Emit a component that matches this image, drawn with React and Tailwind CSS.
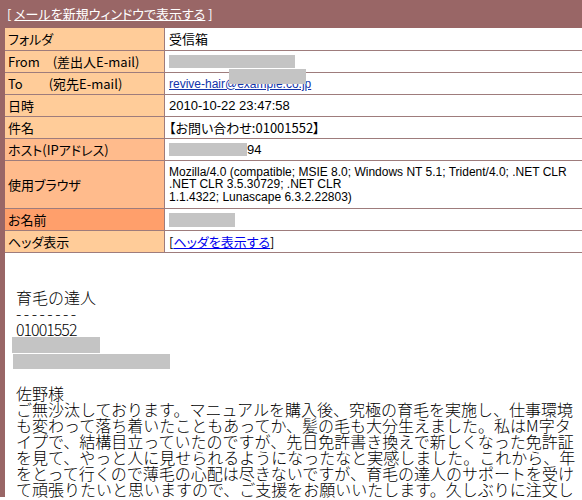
const JP = "font-['MS_PGothic','Noto_Sans_CJK_JP',sans-serif]";

const ROWS = [
  { label: "フォルダ", bg: "bg-[#ffcc99]", kind: "text", value: "受信箱" },
  { label: "From　(差出人E-mail)", bg: "bg-[#ffcc99]", kind: "from" },
  { label: "To　　(宛先E-mail)", bg: "bg-[#ffcc99]", kind: "to" },
  { label: "日時", bg: "bg-[#ffcc99]", kind: "date", value: "2010-10-22 23:47:58" },
  { label: "件名", bg: "bg-[#ffcc99]", kind: "text", value: "【お問い合わせ:01001552】" },
  { label: "ホスト(IPアドレス)", bg: "bg-[#ffbb8c]", kind: "host" },
  { label: "使用ブラウザ", bg: "bg-[#ffbb8c]", kind: "ua", tall: true },
  { label: "お名前", bg: "bg-[#ff9f6b]", kind: "name" },
  { label: "ヘッダ表示", bg: "bg-[#ffcc99]", kind: "header" },
];

const UA_LINES = [
  "Mozilla/4.0 (compatible; MSIE 8.0; Windows NT 5.1; Trident/4.0; .NET CLR",
  ".NET CLR 3.5.30729; .NET CLR",
  "1.1.4322; Lunascape 6.3.2.22803)",
];

const BODY = [
  "ご無沙汰しております。マニュアルを購入後、究極の育毛を実施し、仕事環境",
  "も変わって落ち着いたこともあってか、髪の毛も大分生えました。私はM字タ",
  "イプで、結構目立っていたのですが、先日免許書き換えで新しくなった免許証",
  "を見て、やっと人に見せられるようになったなと実感しました。これから、年",
  "をとって行くので薄毛の心配は尽きないですが、育毛の達人のサポートを受け",
  "て頑張りたいと思いますので、ご支援をお願いいたします。久しぶりに注文し",
];

function Redacted({ className = "" }) {
  return <span className={`inline-block bg-[#c4c4c4] ${className}`} />;
}

function Value({ row }) {
  switch (row.kind) {
    case "from":
      return <Redacted className="w-[126px] h-[13px]" />;
    case "to":
      return (
        <div className="relative flex items-center">
          <a className="text-[#1133aa] underline text-[12px] font-['Liberation_Sans',sans-serif]">revive-hair@example.co.jp</a>
          <Redacted className="absolute left-[60px] top-[-6px] w-[77px] h-[15px]" />
        </div>
      );
    case "date":
      return <span className="text-[13px] font-['Liberation_Sans',sans-serif]">{row.value}</span>;
    case "host":
      return (
        <div className="flex items-center">
          <Redacted className="w-[78px] h-[13px]" />
          <span className="text-[13px] font-['Liberation_Sans',sans-serif]">94</span>
        </div>
      );
    case "ua":
      return (
        <div className="text-[12px] leading-[12.5px] font-['Liberation_Sans',sans-serif] whitespace-nowrap">
          {UA_LINES.map((l) => (
            <div key={l}>{l}</div>
          ))}
        </div>
      );
    case "name":
      return <Redacted className="w-[66px] h-[14px]" />;
    case "header":
      return (
        <span className="text-[13px]">
          [<a className="text-[#0000ee] underline">ヘッダを表示する</a>]
        </span>
      );
    default:
      return <span className="text-[13px]">{row.value}</span>;
  }
}

export default function App() {
  return (
    <div className={`w-[582px] h-[500px] overflow-hidden bg-white text-black ${JP} [font-feature-settings:'palt']`}>
      <div className="h-[28px] bg-[#996666] text-white text-[13px] flex items-center pl-[7px] whitespace-pre">
        [ <a className="underline">メールを新規ウィンドウで表示する</a> ]
      </div>

      <div className="border-l-[5px] border-[#996666] w-[600px]">
        {ROWS.map((row, i) => (
          <div
            key={row.label}
            className={`flex border-b border-[#9e7c7c] ${row.tall ? "h-[48px]" : i === 0 ? "h-[23px]" : "h-[22px]"}`}
          >
            <div className={`w-[160px] shrink-0 border-r border-[#9e7c7c] ${row.bg} text-[13px] flex items-center pl-[3px] whitespace-pre`}>
              {row.label}
            </div>
            <div className="flex-1 flex items-center pl-[4px]">
              <Value row={row} />
            </div>
          </div>
        ))}

        {/* 本文 (等幅) */}
        <div className="pt-[36px] pl-[11px] text-[16px] leading-[16px] font-light font-['MS_Gothic','Noto_Sans_CJK_JP',monospace] [font-feature-settings:normal] whitespace-nowrap">
          <div>育毛の達人</div>
          <div className="tracking-[2.5px]">--------</div>
          <div className="tracking-[-1px]">01001552</div>
          <div className="h-[16px] -ml-[4px]">
            <Redacted className="w-[88px] h-[16px]" />
          </div>
          <div className="h-[16px] -ml-[3px] flex items-end">
            <Redacted className="w-[157px] h-[15px]" />
          </div>
          <div className="h-[16px]" />
          <div>佐野様</div>
          {BODY.map((l) => (
            <div key={l}>{l}</div>
          ))}
        </div>
      </div>
    </div>
  );
}
